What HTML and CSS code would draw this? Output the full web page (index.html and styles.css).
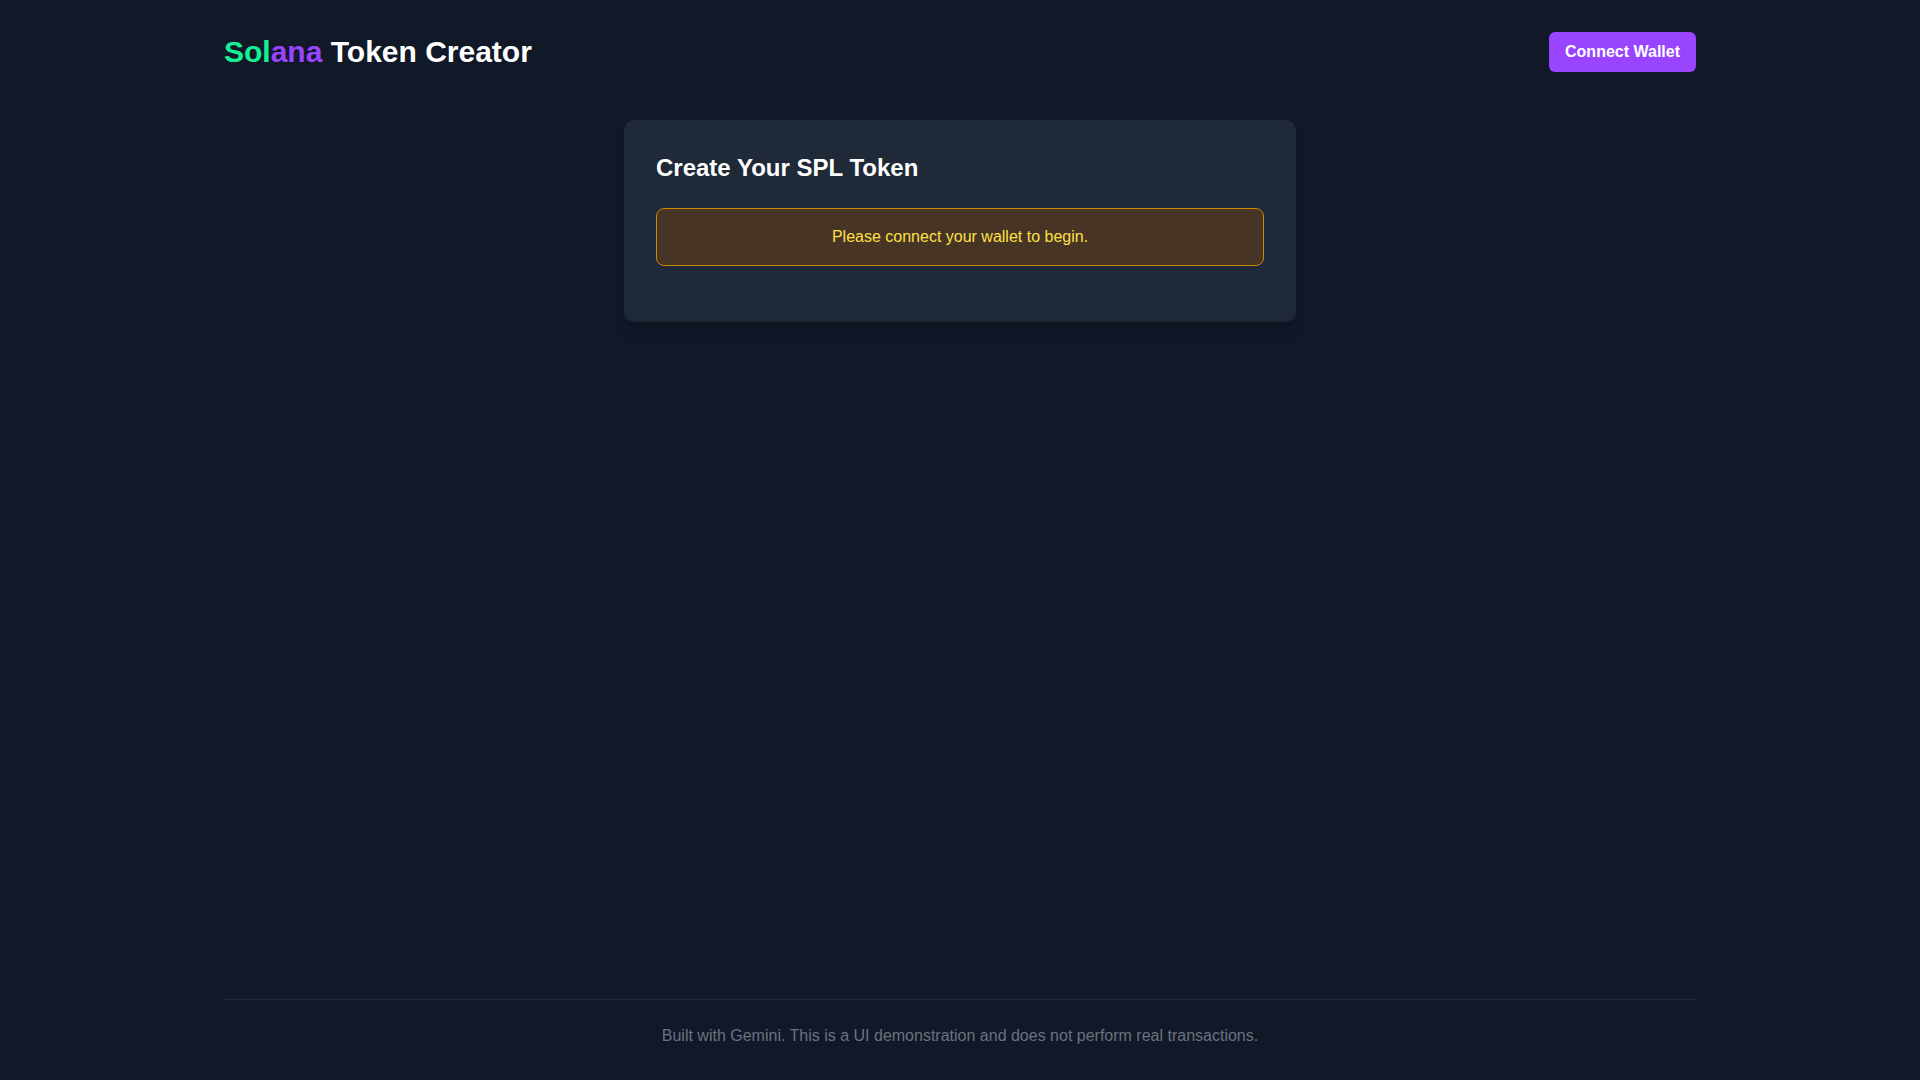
FILE: index.html
```html
<!DOCTYPE html>
<html lang="en">
<head>
    <meta charset="UTF-8">
    <meta name="viewport" content="width=device-width, initial-scale=1.0">
    <title>Solana Token Creator</title>
    <link rel="stylesheet" href="styles.css">
</head>
<body>
    <div class="page">
        <header class="header">
            <h1 class="logo"><span class="sol">Sol</span><span class="ana">ana</span> Token Creator</h1>
            <button type="button" class="connect-btn">Connect Wallet</button>
        </header>

        <main class="main">
            <div class="card">
                <h2>Create Your SPL Token</h2>
                <div class="notice">Please connect your wallet to begin.</div>
            </div>
        </main>

        <footer class="footer">
            <p>Built with Gemini. This is a UI demonstration and does not perform real transactions.</p>
        </footer>
    </div>
</body>
</html>
```

FILE: styles.css
```css
* {
    box-sizing: border-box;
}
body {
    font-family: "Liberation Sans", Arial, sans-serif;
    margin: 0;
    padding: 0;
    background-color: #111827;
    color: #f3f4f6;
}
.page {
    min-height: 100vh;
    max-width: 1536px;
    margin: 0 auto;
    padding: 0 32px;
    display: flex;
    flex-direction: column;
}
.header {
    display: flex;
    align-items: center;
    justify-content: space-between;
    padding: 32px 0;
}
.logo {
    margin: 0;
    font-size: 30px;
    line-height: 36px;
    font-weight: bold;
    color: #ffffff;
}
.logo .sol {
    color: #14f195;
}
.logo .ana {
    color: #9945ff;
}
.connect-btn {
    font-family: inherit;
    font-size: 16px;
    font-weight: bold;
    line-height: 24px;
    padding: 8px 16px;
    background-color: #9945ff;
    color: white;
    border: none;
    border-radius: 6px;
    cursor: pointer;
}
.main {
    flex: 1;
    padding-top: 16px;
}
.card {
    max-width: 672px;
    margin: 0 auto;
    background-color: #1f2937;
    border-radius: 10px;
    padding: 32px 32px 56px;
    box-shadow: 0 10px 15px -3px rgba(0, 0, 0, 0.1), 0 4px 6px -4px rgba(0, 0, 0, 0.1);
}
.card h2 {
    margin: 0 0 24px;
    font-size: 24px;
    line-height: 32px;
    font-weight: bold;
    color: #ffffff;
}
.notice {
    padding: 16px;
    text-align: center;
    font-size: 16px;
    line-height: 24px;
    color: #fde047;
    background-color: #483424;
    border: 1px solid #ca8a04;
    border-radius: 8px;
}
.footer {
    border-top: 1px solid #1f2937;
    padding: 24px 0 32px;
    text-align: center;
}
.footer p {
    margin: 0;
    font-size: 16px;
    line-height: 24px;
    color: #6b7280;
}
```
